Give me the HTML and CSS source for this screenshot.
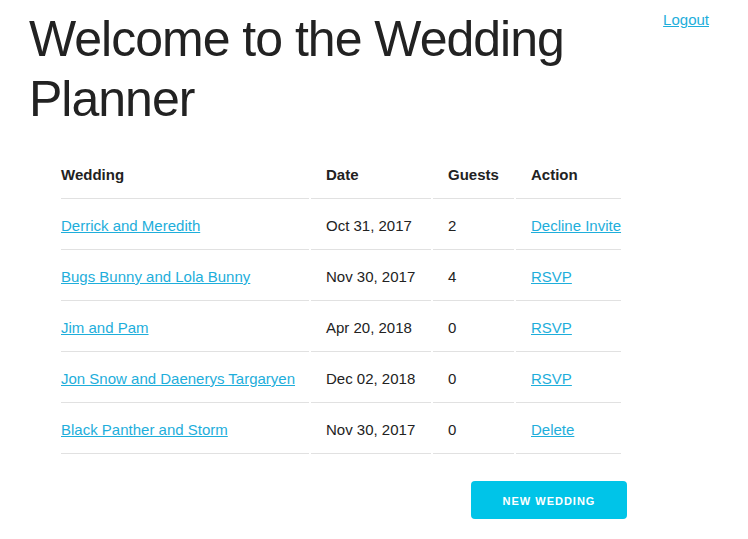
FILE: index.html
```html
<!DOCTYPE html>
<html lang="en">
<head>
<meta charset="utf-8">
<title>Wedding Planner</title>
<link rel="stylesheet" href="styles.css">
</head>
<body>
<div class="page">
  <header class="top">
    <h1 class="title">Welcome to the Wedding Planner</h1>
    <a class="logout" href="#">Logout</a>
  </header>
  <main class="content">
    <table class="weddings">
      <thead>
        <tr>
          <th class="c-wedding">Wedding</th>
          <th class="c-date">Date</th>
          <th class="c-guests">Guests</th>
          <th class="c-action">Action</th>
        </tr>
      </thead>
      <tbody>
        <tr>
          <td><a href="#">Derrick and Meredith</a></td>
          <td>Oct 31, 2017</td>
          <td>2</td>
          <td><a href="#">Decline Invite</a></td>
        </tr>
        <tr>
          <td><a href="#">Bugs Bunny and Lola Bunny</a></td>
          <td>Nov 30, 2017</td>
          <td>4</td>
          <td><a href="#">RSVP</a></td>
        </tr>
        <tr>
          <td><a href="#">Jim and Pam</a></td>
          <td>Apr 20, 2018</td>
          <td>0</td>
          <td><a href="#">RSVP</a></td>
        </tr>
        <tr>
          <td><a href="#">Jon Snow and Daenerys Targaryen</a></td>
          <td>Dec 02, 2018</td>
          <td>0</td>
          <td><a href="#">RSVP</a></td>
        </tr>
        <tr>
          <td><a href="#">Black Panther and Storm</a></td>
          <td>Nov 30, 2017</td>
          <td>0</td>
          <td><a href="#">Delete</a></td>
        </tr>
      </tbody>
    </table>
    <div class="actions">
      <a class="button" href="#">New Wedding</a>
    </div>
  </main>
</div>
</body>
</html>
```
FILE: styles.css
```css
html, body {
  margin: 0;
  padding: 0;
  background: #fff;
}
body {
  font-family: "Liberation Sans", Arial, Helvetica, sans-serif;
  font-size: 15px;
  line-height: 24px;
  color: #222;
}
.page {
  padding-top: 8px;
}
.top {
  display: flex;
  justify-content: space-between;
  align-items: flex-start;
  padding-left: 29px;
  padding-right: 39px;
}
.title {
  margin: 0 0 19px 0;
  padding-top: 1px;
  max-width: 600px;
  font-size: 50px;
  line-height: 60px;
  font-weight: 400;
  letter-spacing: -1px;
  color: #222;
}
.logout {
  color: #1eaedb;
  text-decoration: underline;
}
.content {
  padding-left: 59px;
  width: 568px;
}
.weddings {
  border-collapse: separate;
  border-spacing: 2px;
  margin: 0 0 25px 0;
  table-layout: fixed;
  width: 564px;
}
.weddings th,
.weddings td {
  padding: 13px 15px 11px 15px;
  text-align: left;
  border-bottom: 1px solid #e1e1e1;
  white-space: nowrap;
  overflow: visible;
}
.weddings th:first-child,
.weddings td:first-child {
  padding-left: 0;
}
.weddings th:last-child,
.weddings td:last-child {
  padding-right: 0;
}
.weddings th {
  font-weight: 700;
}
.c-wedding { width: 233px; }
.c-date { width: 90px; }
.c-guests { width: 51px; }
.c-action { width: 90px; }
.weddings a {
  color: #1eaedb;
  text-decoration: underline;
}
.actions {
  display: flex;
  justify-content: flex-end;
}
.button {
  display: inline-block;
  box-sizing: border-box;
  height: 38px;
  line-height: 40px;
  padding: 0 30px;
  width: 156px;
  text-align: center;
  background: #00c4e8;
  color: #fff;
  font-size: 11px;
  font-weight: 700;
  letter-spacing: 1px;
  text-transform: uppercase;
  text-decoration: none;
  border-radius: 4px;
}
```
